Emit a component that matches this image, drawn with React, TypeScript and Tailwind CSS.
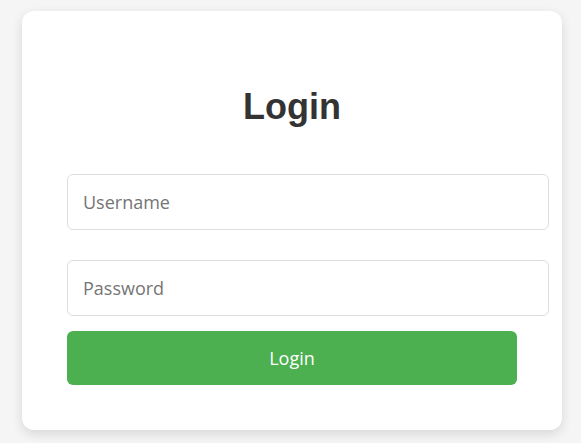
export default function App() {
    return (
        <div className="min-h-[443px] w-full bg-[#f4f5f4] pt-[11px] pl-[22px] font-['Liberation_Sans',Arial,sans-serif]">
            <div className="w-[540px] rounded-[12px] bg-white px-[45px] pt-[75px] pb-[45px] shadow-[0_4px_12px_rgba(0,0,0,0.12)]">
                <h2 className="text-center text-[36px] leading-[41px] font-bold text-[#333]">Login</h2>

                <div className="mt-[47px] flex flex-col font-['Open_Sans','Noto_Sans',sans-serif]">
                    <input
                        type="text"
                        placeholder="Username"
                        className="h-[56px] w-[482px] rounded-[6px] border border-[#ddd] px-[15px] text-[18px] text-[#333] placeholder:text-[#757575] outline-none"
                    />
                    <input
                        type="password"
                        placeholder="Password"
                        className="mt-[30px] h-[56px] w-[482px] rounded-[6px] border border-[#ddd] px-[15px] text-[18px] text-[#333] placeholder:text-[#757575] outline-none"
                    />
                    <button className="mt-[15px] h-[54px] w-[450px] rounded-[6px] bg-[#4caf50] text-[18px] text-white">
                        Login
                    </button>
                </div>
            </div>
        </div>
    )
}
